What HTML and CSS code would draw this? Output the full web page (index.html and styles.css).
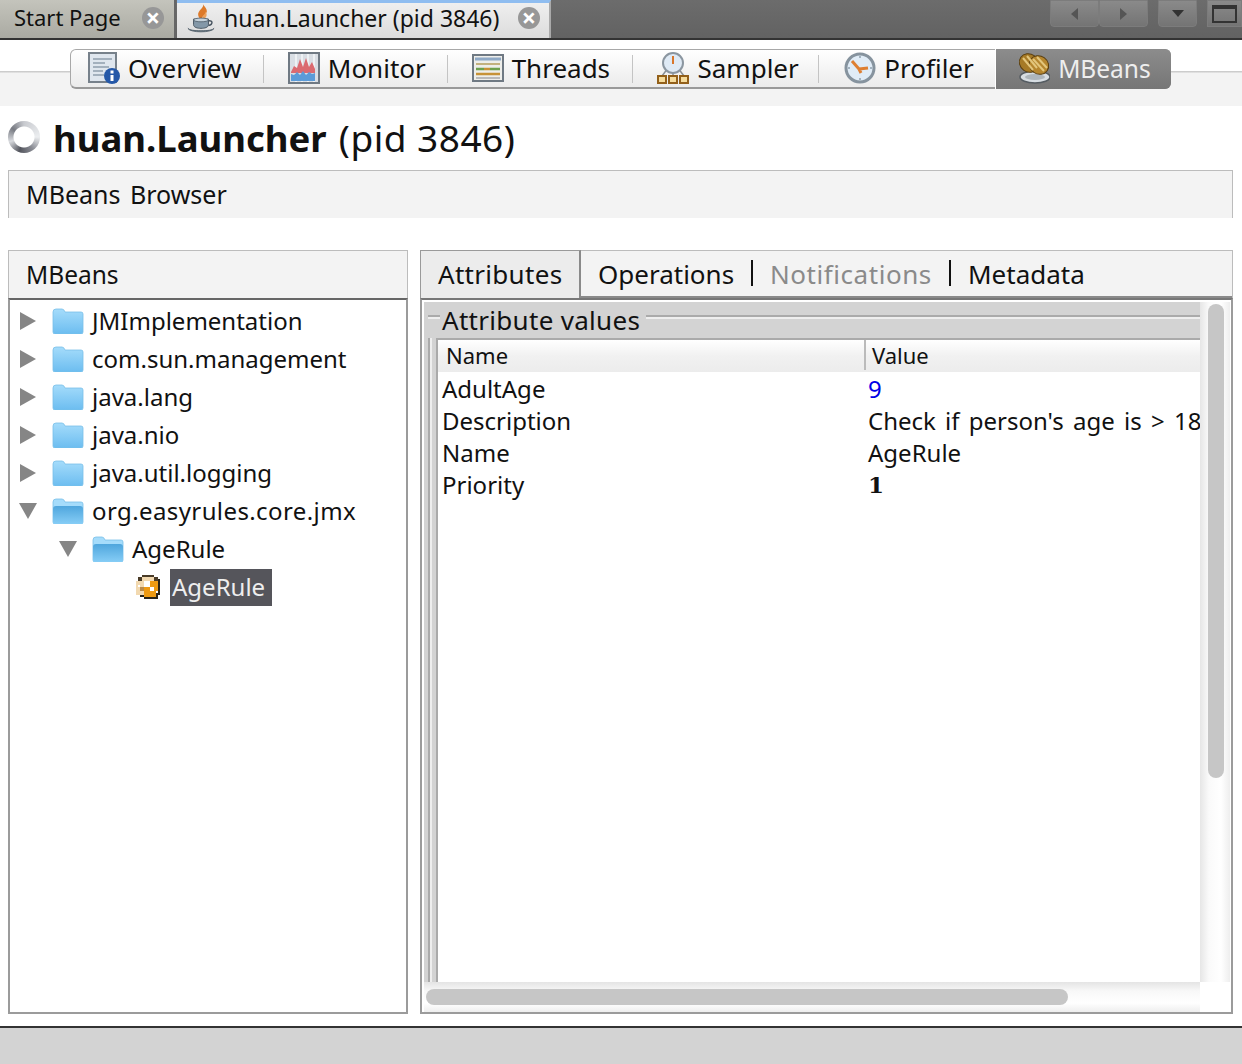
FILE: index.html
```html
<!DOCTYPE html>
<html lang="en">
<head>
  <meta charset="UTF-8">
  <title>VisualVM MBeans</title>
  <link rel="stylesheet" href="styles.css">
</head>
<body>
  <!-- Document tabs -->
  <div class="doc-bar">
    <div class="doc-tab doc-tab-start">
      <span class="doc-label">Start Page</span>
      <span class="close-btn">×</span>
    </div>
    <div class="doc-tab doc-tab-active">
      <svg class="cup-icon" viewBox="0 0 30 32">
        <path d="M17 0c2 4-6 7-5 12 .4 2 2 4 4 5-2-4 7-6 5-11-.6-2-3-4-4-6z" fill="#dd7a2a"/>
        <path d="M20 8c0 3-5 5-3 9 2-1 6-4 3-9z" fill="#eda35e"/>
        <path d="M7 16h16v6c0 3-4 4-8 4s-8-1-8-4z" fill="#8498a8" stroke="#46535f"/>
        <ellipse cx="15" cy="17" rx="8" ry="2" fill="#c7d3dc" stroke="#46535f" stroke-width=".8"/>
        <path d="M23 18c5-1 5 4 0 5" fill="none" stroke="#46535f" stroke-width="1.500"/>
        <path d="M1 26c2 5 26 5 28 0-2 2-6 2.500-14 2.500S3 28 1 26z" fill="#74868f" stroke="#46535f" stroke-width=".8"/>
      </svg>
      <span class="doc-label">huan.Launcher (pid 3846)</span>
      <span class="close-btn">×</span>
    </div>
    <div class="doc-controls">
      <div class="ctrl-btn ctrl-wide"><i class="arrow-left"></i></div>
      <div class="ctrl-btn ctrl-wide"><i class="arrow-right"></i></div>
      <div class="ctrl-btn ctrl-drop"><i class="arrow-down"></i></div>
      <div class="ctrl-btn ctrl-max"><i class="max-box"></i></div>
    </div>
  </div>

  <!-- View switcher -->
  <div class="toolbar">
    <div class="segments">
      <div class="segment seg-overview">
        <svg class="seg-icon" viewBox="0 0 32 32">
          <rect x="1" y="1" width="27" height="29" fill="#dfe6ee" stroke="#77818b" stroke-width="2"/>
          <path d="M5 7h19M5 11h12M5 15h16M5 19h10M5 23h11" stroke="#a3b0bd" stroke-width="2"/>
          <circle cx="24" cy="24" r="8" fill="#2558a8"/>
          <rect x="22.500" y="23" width="3" height="6" fill="#fff"/>
          <rect x="22.500" y="18.500" width="3" height="3" fill="#fff"/>
        </svg>
        <span>Overview</span>
      </div>
      <div class="segment seg-monitor">
        <svg class="seg-icon" viewBox="0 0 32 32">
          <rect x="1" y="1" width="30" height="30" fill="#d9dee4" stroke="#6f7983" stroke-width="2"/>
          <path d="M8 2v28M14 2v28M20 2v28M26 2v28" stroke="#eef1f4" stroke-width="2"/>
          <path d="M3 20l3-6 3 2 3-9 3 8 3-9 3 9 3-5 3 7v4H3z" fill="#db6a70"/>
          <path d="M3 29v-7l3 1 3-3 3 3 3-4 3 4 3-3 3 2 3-1v8z" fill="#5b9bd8"/>
        </svg>
        <span>Monitor</span>
      </div>
      <div class="segment seg-threads">
        <svg class="seg-icon" viewBox="0 0 32 32">
          <rect x="1" y="3" width="30" height="26" fill="#eeeeea" stroke="#6f7983" stroke-width="2"/>
          <path d="M3 7h26" stroke="#8fa9c6" stroke-width="3"/>
          <path d="M4 12h24" stroke="#c3b17e" stroke-width="2"/>
          <path d="M4 17h8M18 17h10" stroke="#6ea04e" stroke-width="2.500"/>
          <path d="M12 17h6M4 22h24" stroke="#c79236" stroke-width="2.500"/>
          <path d="M4 26h24" stroke="#b9b9b9" stroke-width="2"/>
        </svg>
        <span>Threads</span>
      </div>
      <div class="segment seg-sampler">
        <svg class="seg-icon" viewBox="0 0 32 32">
          <path d="M5 24l6-8M27 24l-6-8M16 20v4" stroke="#8a8f94" stroke-width="1.500"/>
          <circle cx="16" cy="11" r="10" fill="#dfeaf5" stroke="#8b96a0" stroke-width="2"/>
          <path d="M16 4v8" stroke="#d9762b" stroke-width="2"/>
          <rect x="1" y="24" width="8" height="7" fill="#f6dc9c" stroke="#93601a" stroke-width="2"/>
          <rect x="12" y="24" width="8" height="7" fill="#f6dc9c" stroke="#93601a" stroke-width="2"/>
          <rect x="23" y="24" width="8" height="7" fill="#f6dc9c" stroke="#93601a" stroke-width="2"/>
        </svg>
        <span>Sampler</span>
      </div>
      <div class="segment seg-profiler">
        <svg class="seg-icon" viewBox="0 0 32 32">
          <circle cx="16" cy="16" r="14" fill="#e0ecf7" stroke="#86939e" stroke-width="3"/>
          <path d="M16 4v2M16 26v2M4 16h2M26 16h2" stroke="#8fa0ae" stroke-width="1.500"/>
          <path d="M15 17L8 9M15 17l9-1M15 17l2 4" stroke="#de7f32" stroke-width="3"/>
        </svg>
        <span>Profiler</span>
      </div>
      <div class="segment seg-mbeans">
        <svg class="seg-icon" viewBox="0 0 32 32">
          <ellipse cx="17" cy="25" rx="15" ry="6" fill="#d7dde2" stroke="#555c62" stroke-width="1.500"/>
          <ellipse cx="17" cy="25" rx="10" ry="3" fill="#aeb6bc"/>
          <ellipse cx="11" cy="11" rx="10" ry="9" transform="rotate(35 11 11)" fill="#a67a26" stroke="#5a3f10"/>
          <ellipse cx="21" cy="13" rx="10" ry="9" transform="rotate(35 21 13)" fill="#b5862e" stroke="#5a3f10"/>
          <path d="M5 6l10 12M9 4l10 12" stroke="#e3c67c" stroke-width="2"/>
          <path d="M15 7l11 12M19 5l10 11" stroke="#e3c67c" stroke-width="2"/>
        </svg>
        <span>MBeans</span>
      </div>
    </div>
  </div>

  <!-- Application title -->
  <div class="app-title">
    <span class="spinner"></span>
    <h1><b>huan.Launcher</b> (pid 3846)</h1>
  </div>

  <div class="section-head">MBeans Browser</div>

  <div class="browser">
    <!-- MBeans tree -->
    <div class="tree-panel">
      <div class="panel-head">MBeans</div>
      <div class="tree">
        <div class="tree-row"><i class="tri-right"></i><svg class="folder"><use href="#folder-closed"/></svg><span>JMImplementation</span></div>
        <div class="tree-row"><i class="tri-right"></i><svg class="folder"><use href="#folder-closed"/></svg><span>com.sun.management</span></div>
        <div class="tree-row"><i class="tri-right"></i><svg class="folder"><use href="#folder-closed"/></svg><span>java.lang</span></div>
        <div class="tree-row"><i class="tri-right"></i><svg class="folder"><use href="#folder-closed"/></svg><span>java.nio</span></div>
        <div class="tree-row"><i class="tri-right"></i><svg class="folder"><use href="#folder-closed"/></svg><span>java.util.logging</span></div>
        <div class="tree-row"><i class="tri-down"></i><svg class="folder"><use href="#folder-open"/></svg><span class="wide-name">org.easyrules.core.jmx</span></div>
        <div class="tree-row level-2"><i class="tri-down"></i><svg class="folder"><use href="#folder-open"/></svg><span>AgeRule</span></div>
        <div class="tree-row level-3">
          <svg class="bean-icon" viewBox="0 0 12 12" shape-rendering="crispEdges">
            <path d="M3 0h6v1H3zM1 1h2v2H1zM9 1h2v2H9z" fill="#4a3c28"/>
            <path d="M3 1h6v2H3zM0 3h4v7H0z" fill="#f2d9b0"/>
            <path d="M4 3h3v3H4zM7 6h2v2H7zM1 5h1v1H1z" fill="#fff"/>
            <path d="M7 3h2v3H7zM4 6h3v5H4zM7 8h3v3H7zM9 3h2v5H9z" fill="#ee9a12"/>
            <path d="M11 2h1v8h-1zM2 10h2v1H2zM4 11h7v1H4zM10 9h1v2h-1z" fill="#2a2418"/>
            <path d="M2 6h2v2H2z" fill="#b98a4a"/>
          </svg>
          <span class="tree-selected">AgeRule</span>
        </div>
      </div>
    </div>

    <!-- Detail tabs -->
    <div class="detail-panel">
      <div class="detail-tabs">
        <div class="detail-tab detail-tab-active">Attributes</div>
        <div class="detail-tab tab-operations">Operations</div>
        <div class="detail-tab tab-notifications">Notifications</div>
        <div class="detail-tab tab-metadata">Metadata</div>
        <div class="detail-tab tab-filler"></div>
      </div>
      <div class="detail-body">
        <div class="scroll-row">
          <div class="attr-view">
            <div class="legend-row"><span class="legend">Attribute values</span></div>
            <div class="attr-frame">
              <div class="attr-table">
                <div class="attr-head">
                  <div class="col-name">Name</div>
                  <div class="col-value">Value</div>
                </div>
                <div class="attr-row"><div class="col-name">AdultAge</div><div class="col-value val-link">9</div></div>
                <div class="attr-row"><div class="col-name">Description</div><div class="col-value val-text">Check if person's age is &gt; 18</div></div>
                <div class="attr-row"><div class="col-name">Name</div><div class="col-value">AgeRule</div></div>
                <div class="attr-row"><div class="col-name">Priority</div><div class="col-value val-bold">1</div></div>
              </div>
            </div>
          </div>
          <div class="vscroll"><div class="vthumb"></div></div>
        </div>
        <div class="hscroll-row">
          <div class="hscroll"><div class="hthumb"></div></div>
          <div class="corner"></div>
        </div>
      </div>
    </div>
  </div>

  <div class="status-bar"></div>

  <!-- Folder shapes used by the tree -->
  <svg class="icon-defs">
    <defs>
      <linearGradient id="fold-front" x1="0" y1="0" x2="0" y2="1">
        <stop offset="0" stop-color="#a5dcfb"/>
        <stop offset="1" stop-color="#6cbdf0"/>
      </linearGradient>
      <linearGradient id="fold-open" x1="0" y1="0" x2="0" y2="1">
        <stop offset="0" stop-color="#4fa6dd"/>
        <stop offset="1" stop-color="#86cdf6"/>
      </linearGradient>
      <symbol id="folder-closed" viewBox="0 0 32 26">
        <path d="M1 4q0-3 3-3h6q2 0 3 3h16q2 0 2 2v18q0 2-2 2H3q-2 0-2-2z" fill="url(#fold-front)" stroke="#78bfe9" stroke-width=".8"/>
      </symbol>
      <symbol id="folder-open" viewBox="0 0 32 26">
        <path d="M1 4q0-3 3-3h6q2 0 3 3h16q2 0 2 2v18q0 2-2 2H3q-2 0-2-2z" fill="#a5dcfb" stroke="#78bfe9" stroke-width=".8"/>
        <path d="M1 11q0-3 3-3h24q3 0 3 3v13q0 2-2 2H3q-2 0-2-2z" fill="url(#fold-open)"/>
      </symbol>
    </defs>
  </svg>
</body>
</html>
```

FILE: styles.css
```css
/* Colors and fonts */
:root {
  --ui-font: "Noto Sans", "Open Sans", sans-serif;
  --panel-bg: #f3f3f3;
  --line: #bcbcbc;
  --frame: #9b9b9b;
  --dark-line: #333;
  --gray-bg: #d3d3d3;
}

* {
  box-sizing: border-box;
}

html,
body {
  height: 100%;
}

body {
  margin: 0;
  overflow: hidden;
  background: #fff;
  color: #111;
  font-family: var(--ui-font);
  font-size: 26px;
  display: flex;
  flex-direction: column;
}

/* Document tabs */
.doc-bar {
  height: 40px;
  flex: none;
  display: flex;
  background: linear-gradient(#6c6c6c, #626262);
  border-bottom: 2px solid #333;
}

.doc-tab {
  width: 176px;
  display: flex;
  align-items: center;
  padding: 0 0 4px 14px;
  background: linear-gradient(#c4c4bc, #aaaaa2);
  border-right: 2px solid #666;
  font-size: 23px;
  position: relative;
}

.doc-tab-start {
  font-size: 22px;
}

.doc-tab-active {
  width: 374px;
  margin-left: 1px;
  padding: 0 0 3px 10px;
  background: linear-gradient(#efefef, #dcdcdc);
  border-top: 3px solid #8fbdf0;
  border-right: 2px solid #aaa;
}

.doc-tab-active .doc-label {
  padding-bottom: 2px;
}

.doc-label {
  white-space: nowrap;
}

.cup-icon {
  width: 28px;
  height: 32px;
  margin-right: 9px;
}

.close-btn {
  position: absolute;
  right: 10px;
  top: 7px;
  width: 22px;
  height: 22px;
  border-radius: 50%;
  background: #979797;
  color: #fff;
  font-size: 25px;
  font-weight: 700;
  line-height: 21px;
  text-align: center;
}

.doc-tab-active .close-btn {
  top: 4px;
  right: 9px;
}

.doc-controls {
  margin-left: auto;
  display: flex;
  height: 27px;
}

.ctrl-btn {
  height: 27px;
  display: flex;
  align-items: center;
  justify-content: center;
  background: linear-gradient(#8a8a8a, #747474);
  border: 1px solid #7c7c7c;
  border-radius: 0 0 4px 4px;
}

.ctrl-wide {
  width: 49px;
}

.ctrl-drop {
  width: 39px;
  margin-left: 10px;
}

.ctrl-max {
  width: 35px;
  margin-left: 10px;
  border-radius: 0;
}

.arrow-left {
  border: 6px solid transparent;
  border-left-width: 0;
  border-right: 7px solid #555;
}

.arrow-right {
  border: 6px solid transparent;
  border-right-width: 0;
  border-left: 7px solid #555;
}

.arrow-down {
  border: 6px solid transparent;
  border-bottom-width: 0;
  border-top: 7px solid #333;
}

.max-box {
  width: 25px;
  height: 18px;
  border: 2px solid #333;
  border-top-width: 4px;
}

/* View switcher */
.toolbar {
  height: 66px;
  flex: none;
  padding: 9px 0 0 70px;
  background: linear-gradient(#fff 0, #fff 31px, #ccc 31px, #ccc 32px, var(--panel-bg) 33px);
}

.segments {
  width: 1101px;
  height: 40px;
  display: flex;
  border: 1px solid #a8a8a8;
  border-bottom: 2px solid #999;
  border-radius: 6px;
  background: linear-gradient(#fff 0, #f6f6f6 45%, #ebebeb 100%);
}

.segment {
  display: flex;
  align-items: center;
  gap: 8px;
  position: relative;
  padding-bottom: 2px;
  white-space: nowrap;
}

.segment:not(.seg-mbeans):not(.seg-profiler)::after {
  content: "";
  position: absolute;
  right: 0;
  top: 5px;
  bottom: 4px;
  width: 1px;
  background: #c4c4c4;
}

.seg-overview { width: 193px; padding-left: 17px; }
.seg-monitor { width: 184px; padding-left: 24px; }
.seg-threads { width: 186px; padding-left: 24px; }
.seg-sampler { width: 186px; padding-left: 24px; }
.seg-profiler { width: 176px; padding-left: 25px; }

.seg-mbeans {
  width: 176px;
  margin: -1px -1px -2px 0;
  padding-left: 22px;
  background: linear-gradient(#8c8c8c, #767676);
  border-left: 1px solid #fff;
  border-radius: 0 6px 6px 0;
  color: #eee;
  font-size: 24.5px;
}

.seg-icon {
  width: 32px;
  height: 32px;
  flex: none;
}

/* Application title */
.app-title {
  height: 64px;
  flex: none;
  display: flex;
  align-items: center;
  padding: 0 0 2px 8px;
  gap: 13px;
}

.spinner {
  width: 32px;
  height: 32px;
  flex: none;
  border-radius: 50%;
  background:
    radial-gradient(circle, #fff 0 10px, transparent 11px),
    conic-gradient(#c8cacf, #eceef0 25%, #8a8c94 40%, #54565e 55%, #d8dade 70%, #777a82 85%, #c8cacf);
}

h1 {
  margin: 0;
  font-size: 37px;
  font-weight: 400;
  letter-spacing: .5px;
  white-space: nowrap;
}

h1 b {
  font-size: 36.500px;
  letter-spacing: 0;
  margin-right: 2px;
}

.section-head {
  height: 48px;
  flex: none;
  width: 1225px;
  margin-left: 8px;
  padding: 0 0 2px 17px;
  display: flex;
  align-items: center;
  background: var(--panel-bg);
  border: 1px solid var(--line);
  border-bottom: 0;
  font-size: 25px;
  word-spacing: 3px;
}

/* Two columns below the heading */
.browser {
  height: 764px;
  flex: none;
  margin: 32px 0 0 8px;
  width: 1225px;
  display: grid;
  grid-template-columns: 400px 813px;
  gap: 12px;
}

.panel-head {
  height: 48px;
  padding-left: 17px;
  display: flex;
  align-items: center;
  background: var(--panel-bg);
  border: 1px solid var(--line);
  border-bottom: 0;
  font-size: 24.500px;
}

.tree-panel {
  display: flex;
  flex-direction: column;
}

.tree {
  flex: 1;
  padding-top: 2px;
  border: 2px solid var(--frame);
  border-top-color: #666;
  font-size: 24px;
}

.tree-row {
  height: 38px;
  display: flex;
  align-items: center;
  padding-left: 10px;
  white-space: nowrap;
}

.tree-row span {
  padding-bottom: 2px;
}

.level-2 {
  padding-left: 50px;
}

.level-3 {
  padding-left: 126px;
}

.tri-right {
  width: 0;
  margin-right: 16px;
  border: 9px solid transparent;
  border-left: 16px solid #868686;
  border-right-width: 0;
}

.tri-down {
  width: 0;
  margin: 0 15px 0 -1px;
  border: 8px solid transparent;
  border-top: 16px solid #868686;
  border-bottom-width: 0;
  border-left-width: 9px;
  border-right-width: 9px;
}

.folder {
  width: 32px;
  height: 26px;
  flex: none;
  margin-right: 8px;
}

.wide-name {
  letter-spacing: .4px;
}

.bean-icon {
  width: 24px;
  height: 24px;
  flex: none;
  margin-right: 10px;
}

.tree-row .tree-selected {
  width: 102px;
  height: 37px;
  padding-left: 2px;
  display: flex;
  align-items: center;
  background: #55555b;
  color: #eee;
}

/* Detail tabs */
.detail-panel {
  display: flex;
  flex-direction: column;
}

.detail-tabs {
  height: 48px;
  flex: none;
  display: flex;
  background: var(--panel-bg);
  border-top: 1px solid var(--line);
  border-right: 1px solid var(--line);
}

.detail-tab {
  padding-left: 17px;
  display: flex;
  align-items: center;
  position: relative;
  border-bottom: 2px solid #8a8a8a;
  white-space: nowrap;
}

.detail-tab-active {
  width: 161px;
  padding-bottom: 2px;
  background: #ececec;
  border-left: 1px solid #9a9a9a;
  border-right: 2px solid #8a8a8a;
  border-bottom: 0;
  margin-top: -1px;
  border-top: 1px solid #9a9a9a;
  letter-spacing: .3px;
}

.tab-operations { width: 172px; }
.tab-notifications { width: 198px; color: #8a8a8a; letter-spacing: .55px; }
.tab-metadata { width: 150px; }
.tab-filler { flex: 1; }

.tab-operations::after,
.tab-notifications::after {
  content: "";
  position: absolute;
  right: 0;
  top: 9px;
  height: 26px;
  width: 2px;
  background: #111;
}

.detail-body {
  flex: 1;
  display: flex;
  flex-direction: column;
  min-height: 0;
  padding: 2px 1px 0 2px;
  border: 2px solid var(--frame);
  border-top-color: #777;
}

.scroll-row {
  flex: 1;
  display: flex;
  min-height: 0;
}

.attr-view {
  flex: 1;
  min-width: 0;
  display: flex;
  flex-direction: column;
  background: var(--gray-bg);
}

.legend-row {
  height: 36px;
  flex: none;
  margin-left: 4px;
  padding-left: 12px;
  background: linear-gradient(transparent 13px, #aaa 13px, #aaa 15px, #eee 15px, #eee 17px, transparent 17px);
}

.legend {
  display: inline-block;
  height: 32px;
  line-height: 28px;
  padding: 0 6px 0 2px;
  background: var(--gray-bg);
  letter-spacing: .3px;
}

.attr-frame {
  flex: 1;
  min-height: 0;
  margin-left: 4px;
  padding-left: 6px;
  border-left: 2px solid #aaa;
  box-shadow: inset 2px 0 #eee;
}

.attr-table {
  height: 100%;
  background: #fff;
  border-left: 2px solid #aaa;
  border-top: 2px solid #aaa;
  overflow: hidden;
}

.attr-head {
  height: 32px;
  display: flex;
  align-items: center;
  padding-bottom: 2px;
  background: linear-gradient(#fff, #f1f1f1 50%, #ececec);
  font-size: 22px;
}

.attr-head .col-name {
  width: 428px;
  padding-left: 8px;
  border-right: 2px solid #bbb;
}

.attr-head .col-value {
  padding-left: 6px;
}

.attr-row {
  height: 32px;
  display: flex;
  align-items: center;
  padding-bottom: 4px;
  white-space: nowrap;
  font-size: 24px;
}

.attr-row:nth-child(2) {
  margin-top: 2px;
}

.col-name {
  flex: none;
  width: 430px;
  padding-left: 4px;
}

.val-link {
  color: #0000e6;
}

.val-text {
  word-spacing: 3px;
}

.val-bold {
  font-weight: 700;
  font-family: "DejaVu Serif", serif;
  font-size: 23px;
}

/* Scrollbars */
.vscroll {
  width: 30px;
  flex: none;
  padding: 2px 6px 0 8px;
  background: linear-gradient(90deg, #e6e6e6, #fafafa 30%, #fff 70%, #eee);
}

.vthumb {
  height: 474px;
  border-radius: 8px;
  background: #c6c6c6;
}

.hscroll-row {
  height: 30px;
  flex: none;
  display: flex;
}

.hscroll {
  flex: 1;
  padding: 7px 0 0 2px;
  background: linear-gradient(#e4e4e4, #f8f8f8 30%, #fff 70%, #eee);
}

.hthumb {
  width: 642px;
  height: 16px;
  border-radius: 8px;
  background: #c6c6c6;
}

.corner {
  width: 30px;
  background: #fff;
}

/* Bottom bar */
.status-bar {
  flex: 1;
  margin-top: 12px;
  background: var(--gray-bg);
  border-top: 2px solid var(--dark-line);
}

.icon-defs {
  position: absolute;
  width: 0;
  height: 0;
}
```
